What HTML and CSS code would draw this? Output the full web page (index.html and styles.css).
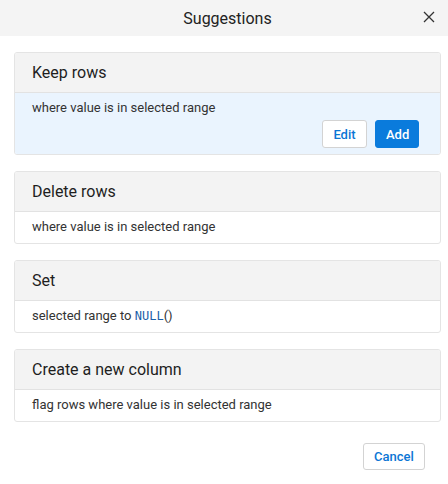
FILE: index.html
```html
<!DOCTYPE html>
<html>
<head>
<meta charset="utf-8">
<link rel="stylesheet" href="styles.css">
</head>
<body>
<div class="dialog">
  <div class="titlebar">
    <span class="title">Suggestions</span>
    <button class="close" aria-label="Close">
      <svg width="12" height="12" viewBox="0 0 12 12"><path d="M1 1L11 11M11 1L1 11" stroke="#333" stroke-width="1.3" fill="none"/></svg>
    </button>
  </div>
  <div class="list">
    <div class="card active">
      <div class="card-head">Keep rows</div>
      <div class="card-body">
        <div class="desc">where value is in selected range</div>
        <div class="actions">
          <button class="btn btn-outline">Edit</button>
          <button class="btn btn-primary">Add</button>
        </div>
      </div>
    </div>
    <div class="card">
      <div class="card-head">Delete rows</div>
      <div class="card-body"><div class="desc">where value is in selected range</div></div>
    </div>
    <div class="card">
      <div class="card-head">Set</div>
      <div class="card-body"><div class="desc">selected range to <span class="code">NULL</span>()</div></div>
    </div>
    <div class="card">
      <div class="card-head">Create a new column</div>
      <div class="card-body"><div class="desc">flag rows where value is in selected range</div></div>
    </div>
  </div>
  <div class="footer">
    <button class="btn btn-outline cancel">Cancel</button>
  </div>
</div>
</body>
</html>
```
FILE: styles.css
```css
* { box-sizing: border-box; }
html, body { margin: 0; padding: 0; background: #ffffff; }
body { font-family: Roboto, "Liberation Sans", sans-serif; color: #222; width: 448px; height: 484px; overflow: hidden; }
.titlebar {
  height: 36px;
  background: #f4f4f4;
  display: flex;
  align-items: center;
  justify-content: center;
  position: relative;
  padding-left: 7px;
}
.title { font-size: 16px; color: #222; }
.close {
  position: absolute;
  right: 13px;
  top: 11px;
  width: 12px;
  height: 12px;
  padding: 0;
  border: 0;
  background: none;
  display: flex;
}
.list {
  padding: 16px 7px 0 14px;
  display: flex;
  flex-direction: column;
  gap: 16px;
}
.card {
  border: 1px solid #e4e4e4;
  border-radius: 3px;
  background: #fff;
  overflow: hidden;
}
.card-head {
  height: 40px;
  background: #f3f3f3;
  border-bottom: 1px solid #e2e2e2;
  padding: 0 17px;
  display: flex;
  align-items: center;
  font-size: 16px;
  color: #1e1e1e;
}
.card-body {
  padding: 7px 17px 8px;
  font-size: 13px;
  color: #333;
}
.desc { line-height: 16px; }
.card.active .card-body { background: #eaf4fe; padding-bottom: 6px; }
.actions {
  display: flex;
  justify-content: flex-end;
  gap: 8px;
  margin-top: 4px;
  padding-right: 4px;
}
.btn {
  height: 28px;
  border-radius: 3px;
  font-family: Roboto, "Liberation Sans", sans-serif;
  font-size: 13px;
  font-weight: 500;
  padding: 0 10px;
  cursor: pointer;
}
.btn-outline { background: #fff; border: 1px solid #d3d3d3; color: #0b76d5; }
.btn-primary { background: #0a7bdc; border: 1px solid #0a7bdc; color: #fff; width: 44px; }
.actions .btn-outline { width: 45px; }
.code { font-family: "DejaVu Sans Mono", "Liberation Mono", monospace; color: #1a5ea8; font-size: 12px; }
.footer {
  display: flex;
  justify-content: flex-end;
  padding: 21px 23px 0 0;
}
.cancel { width: 62px; height: 27px; }
```
